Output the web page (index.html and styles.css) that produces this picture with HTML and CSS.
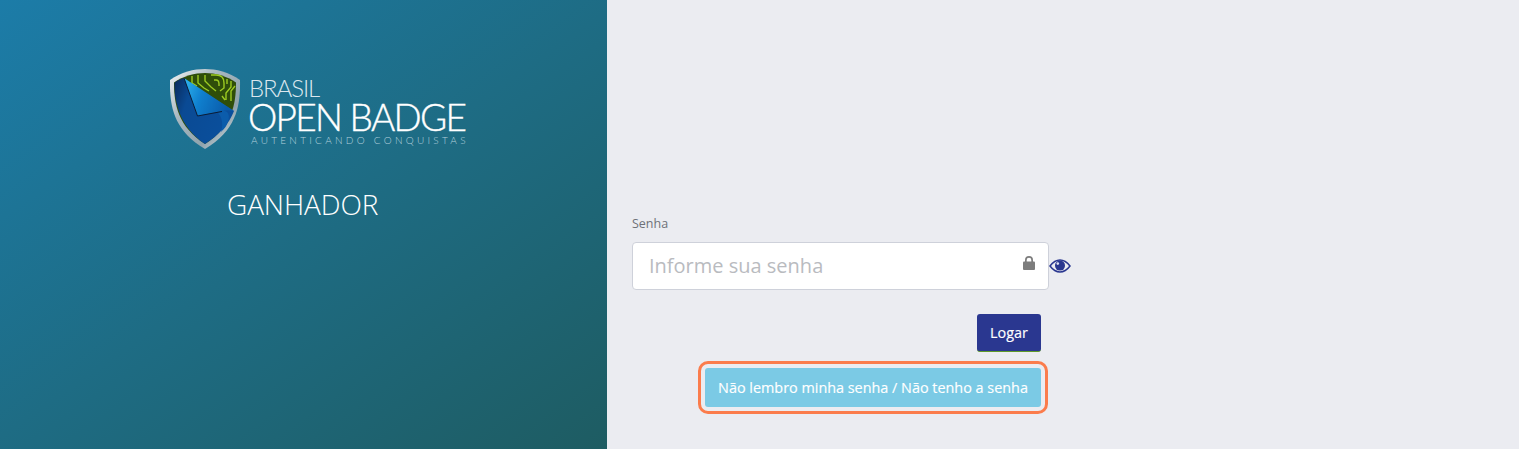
FILE: index.html
```html
<!DOCTYPE html>
<html lang="pt-BR">
<head>
<meta charset="utf-8">
<title>Brasil Open Badge</title>
<link rel="stylesheet" href="styles.css">
</head>
<body>
<main class="page">
  <section class="brand">
    <div class="logo">
      <svg class="shield" width="72" height="82" viewBox="0 0 72 82" aria-hidden="true">
        <defs>
          <linearGradient id="rim" x1="0" y1="0" x2="1" y2="1">
            <stop offset="0" stop-color="#f2f5f6"/><stop offset=".35" stop-color="#a9b8c1"/><stop offset=".7" stop-color="#8fa3ad"/><stop offset="1" stop-color="#f2f5f6"/>
          </linearGradient>
          <linearGradient id="blue" x1="0" y1="0" x2="1" y2="0.4">
            <stop offset="0" stop-color="#0a2a5a"/><stop offset=".3" stop-color="#0a4a94"/><stop offset="1" stop-color="#0a4f9c"/>
          </linearGradient>
          <linearGradient id="flap" x1="0" y1="0" x2="1" y2="0.3">
            <stop offset="0" stop-color="#2fb6f0"/><stop offset=".45" stop-color="#0f7fce"/><stop offset="1" stop-color="#0a5cab"/>
          </linearGradient>
        </defs>
        <path d="M35 1C24 1 11 4 0 12c-.5 25 3 50 35 69c32-19 35.500-44 35-69C59 4 46 1 35 1Z" fill="url(#rim)"/>
        <path d="M35 5C25 5 13 8 4 14.500c0 22 4 44 31 61.500c27-17.500 31-39.500 31-61.500C57 8 45 5 35 5Z" fill="#2f4e0a"/>
        <g fill="none" stroke="#9ccb22" stroke-width="1.400">
          <path d="M22 8v7l5 3M28 7v8l6 5 5 3M35 7v6l6 6 5 4"/>
          <path d="M41 7h5c6 0 8 4 8 8v5l-4 3M44 12h2c3 0 3 2 3 4v2"/>
          <path d="M57 11v5M61 13v6l-5 6v7M65 18l-4 5v10M52 28l3 4"/>
        </g>
        <path d="M14 10C10 11 6 13 4.500 15C4 35 11 60 35 76C49 67 59 56 64 43L28 20Z" fill="url(#blue)"/>
        <path d="M14 10L64 43C60 42 56 42 52 43L27.500 48Z" fill="url(#flap)"/>
        <path d="M52 43C57 42 60 46 58.500 52C57 58 54 61 51 64C53 58 53 49 47 44Z" fill="#0b5cab"/>
        <path d="M14 10L27.500 48L52 43.500" fill="none" stroke="#0b1c36" stroke-width="1"/>
      </svg>
      <div class="wordmark">
        <span class="w-brasil">BRASIL</span>
        <span class="w-open">OPEN BADGE</span>
        <span class="w-tag">AUTENTICANDO CONQUISTAS</span>
      </div>
    </div>
    <h1 class="role">GANHADOR</h1>
  </section>

  <section class="panel">
    <form class="form">
      <label class="label" for="senha">Senha</label>
      <div class="field-row">
        <div class="field">
          <input class="input" id="senha" type="password" placeholder="Informe sua senha">
          <svg class="lock" width="12" height="14" viewBox="0 0 12 14" aria-hidden="true">
            <path d="M2 6V4a4 4 0 0 1 8 0V6H8.300V4a2.300 2.300 0 0 0-4.600 0V6Z" fill="#7d7d7d"/>
            <rect x="0" y="5.500" width="12" height="8.500" rx="1" fill="#7d7d7d"/>
          </svg>
        </div>
        <svg class="eye" width="22" height="14" viewBox="0 0 22 14" aria-hidden="true">
          <path d="M1 7C4 3 7 1 11 1s7 2 10 6c-3 4-6 6-10 6S4 11 1 7Z" fill="none" stroke="#2a3790" stroke-width="1.500"/>
          <circle cx="11" cy="6.600" r="5" fill="#2a3790"/>
          <circle cx="8.800" cy="4.600" r="1.300" fill="#dfe3f2"/>
        </svg>
      </div>
      <div class="actions">
        <button class="btn btn-primary" type="button">Logar</button>
        <button class="btn btn-info" type="button">Não lembro minha senha / Não tenho a senha</button>
      </div>
    </form>
  </section>
</main>
</body>
</html>
```

FILE: styles.css
```css
* { box-sizing: border-box; }
html, body { margin: 0; height: 100%; }
body { font-family: "Open Sans", "Noto Sans", sans-serif; background: #ebecf1; overflow: hidden; }
.page { display: flex; height: 449px; }

.brand {
  width: 607px;
  flex: none;
  display: flex;
  flex-direction: column;
  padding: 68px 0 0 170px;
  background: linear-gradient(145deg, #1c7ca8 0%, #1e6c84 50%, #1e5c62 100%);
  color: #fff;
}
.logo { display: flex; align-items: flex-start; gap: 6px; }
.shield { flex: none; }
.wordmark { display: flex; flex-direction: column; padding-top: 8px; }
.w-brasil { font: 300 24px/23px "Lato", sans-serif; letter-spacing: -1.100px; color: #dbe7ee; margin-left: 1px; }
.w-open { font: 300 37px/35px "Lato", sans-serif; letter-spacing: -1.700px; -webkit-text-stroke: .4px #fff; white-space: nowrap; }
.w-tag { font: 300 10px/12px "Lato", sans-serif; letter-spacing: 3.270px; white-space: nowrap; color: #b3d0dc; margin-left: 3px; }
.role {
  margin: 36px 0 0 57px;
  font: 300 28px/36px "Open Sans", sans-serif;
  letter-spacing: -.1px;
}

.panel { flex: 1; padding: 215px 0 0 25px; }
.form { width: 440px; display: flex; flex-direction: column; }
.label { font-size: 12.500px; line-height: 18px; color: #6e7178; }
.field-row { display: flex; align-items: center; margin-top: 9px; }
.field { position: relative; width: 417px; flex: none; }
.input {
  display: block;
  width: 100%;
  height: 48px;
  padding: 0 40px 2px 16px;
  border: 1px solid #ced1da;
  border-radius: 4px;
  background: #fff;
  font: 20px "Open Sans", sans-serif;
}
.input::placeholder { color: #b9bbbf; opacity: 1; }
.lock { position: absolute; right: 14px; top: 14px; }
.eye { flex: none; }

.actions {
  width: 409px;
  margin-top: 24px;
  display: flex;
  flex-direction: column;
  align-items: flex-end;
  gap: 16px;
}
.btn {
  border: 0;
  border-radius: 3px;
  color: #fff;
  font: 500 14.400px "Open Sans", sans-serif;
  -webkit-text-stroke: .15px #fff;
  padding: 0;
}
.btn-primary { height: 38px; width: 64px; background: #2a3790; border-bottom: 1px solid #5f9a2a; }
.btn-info {
  height: 39px;
  width: 336px;
  background: #7bcae5;
  outline: 3px solid #fb7c4c;
  outline-offset: 4px;
}
```
